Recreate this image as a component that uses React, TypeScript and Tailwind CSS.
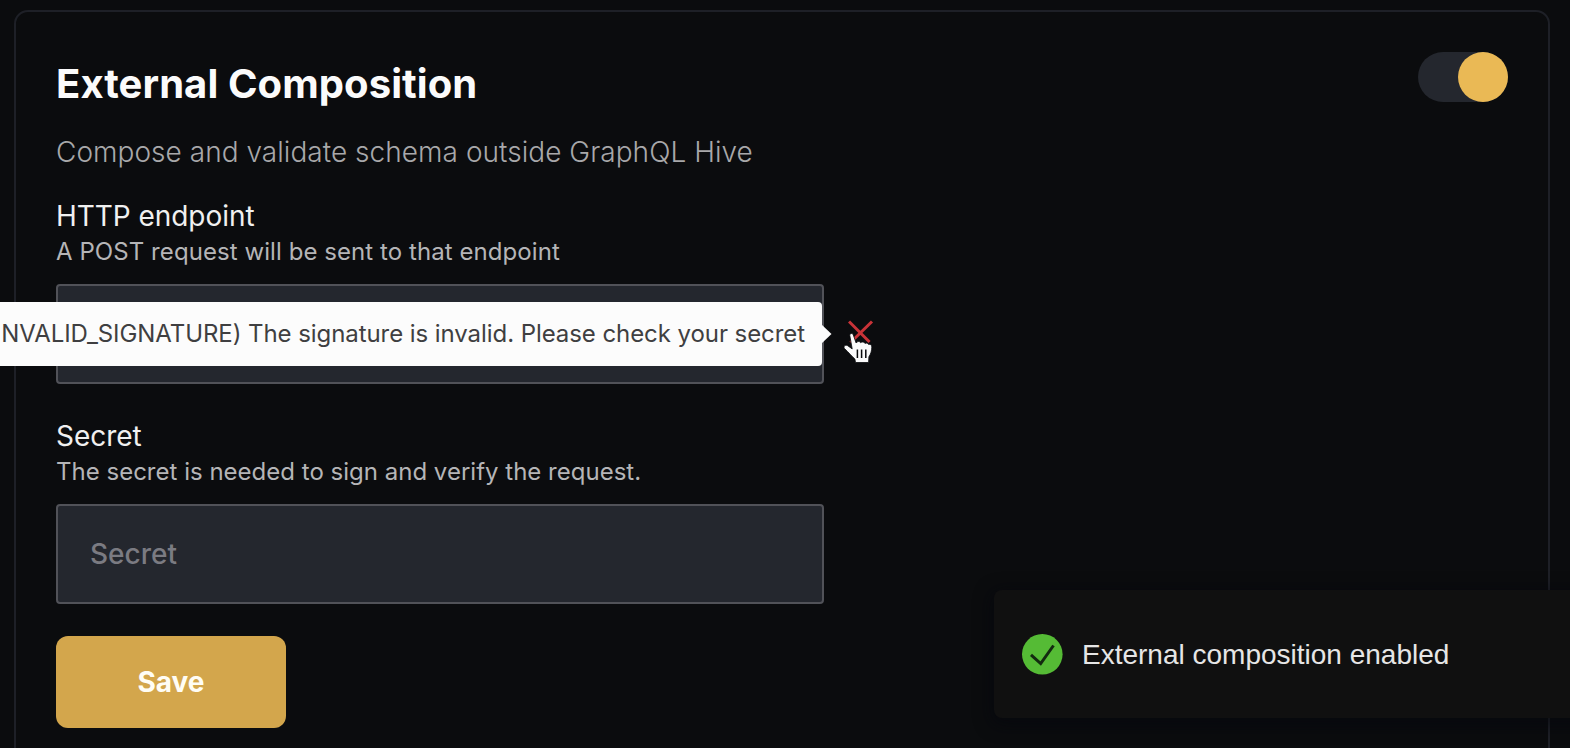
import type { ReactNode } from "react";

function Toggle() {
  return (
    <button
      role="switch"
      aria-checked="true"
      className="flex h-[50px] w-[90px] justify-end rounded-full bg-[#24272e]"
    >
      <span className="size-[50px] rounded-full bg-[#eab955]" />
    </button>
  );
}

function Field({ label, hint, children }: { label: string; hint: ReactNode; children: ReactNode }) {
  return (
    <div className="flex flex-col">
      <div className="h-10 text-[28px] leading-10 tracking-[-0.05px] text-[#f0f0f0]">{label}</div>
      <div className="h-8 text-[24px] leading-8 tracking-[0.07px] text-[#b5b5b7]">{hint}</div>
      <div className="mt-4 flex items-center">{children}</div>
    </div>
  );
}

function ErrorTooltip() {
  return (
    <div className="absolute top-4 right-0 flex h-16 items-center rounded-[4px] bg-[#fcfcfc] pr-[17px] pl-4 text-[24px] tracking-[-0.07px] whitespace-nowrap text-[#3f3f41]">
      <span>(INVALID_SIGNATURE) The signature is invalid. Please check your secret</span>
      <svg className="absolute top-[22px] -right-[10px]" width="11" height="20" viewBox="0 0 11 20" fill="#fcfcfc">
        <path d="M0 0 10.5 10 0 20Z" />
      </svg>
    </div>
  );
}

function ErrorMark() {
  return (
    <div className="relative ml-6 size-6">
      <svg
        className="absolute -top-[2px] left-0"
        width="26"
        height="24"
        viewBox="0 0 26 24"
        fill="none"
        stroke="#c93338"
        strokeWidth="3"
      >
        <path d="M1 1.500 21.500 22M24 1.500 2.500 22.500" />
      </svg>
      <svg
        className="absolute top-[10px] -left-[6px]"
        width="32"
        height="33"
        viewBox="0 0 31 33"
        stroke="#08090b"
        strokeWidth="0.8"
        strokeLinejoin="round"
      >
        <path
          fill="#fafafa"
          d="M7.300 3.600C7 1.300 10 .6 10.800 2.900L13.600 11c.8-1.900 4-1.900 4.600-.3 1-1.300 3.900-.9 4.300.8 1.200-1 3.200-.3 3.600 1 2-.7 3.300.6 3.200 2.700-.1 3.700-.9 6.600-2.900 9.600l-.3 5.700H13l-.6-3.500C9.200 24.200 6.200 20.400 2 16.500c-1.500-2 .8-4.200 3.200-2.800l4.500 3.200Z"
        />
        <path fill="none" strokeWidth="1.500" d="M14.900 17.500v8.500M19.100 17.500v8.500M23.300 17.500v8.500" />
      </svg>
    </div>
  );
}

function Toast() {
  return (
    <div className="absolute top-[590px] left-[994px] flex h-[128px] w-[600px] items-center rounded-[8px] bg-[#101010] pl-7 shadow-[0_4px_16px_4px_rgba(5,6,14,0.6)]">
      <svg width="41" height="41" viewBox="0 0 41 41" fill="none">
        <circle cx="20.300" cy="20.300" r="20.300" fill="#55bb35" />
        <path d="M9 20.800 18.700 29.500 31.500 11.500" stroke="#132a10" strokeWidth="3" />
      </svg>
      <span className="mt-[2px] ml-[19px] font-['Liberation_Sans',Arial,sans-serif] text-[28px] leading-none whitespace-nowrap text-[#e6e6e6]">
        External composition enabled
      </span>
    </div>
  );
}

export default function App() {
  return (
    <main className="relative h-[748px] w-[1570px] overflow-hidden bg-[#0b0c0e] px-[14px] pt-[10px] font-[Inter,sans-serif]">
      <section className="h-[780px] w-[1536px] rounded-[14px] border-2 border-[#1e2027] px-10">
        <header className="flex h-[100px] items-start justify-between pt-[40px]">
          <h1 className="mt-1 text-[40px] leading-[56px] font-bold tracking-[0.08px] text-[#fbfbfb]">
            External Composition
          </h1>
          <Toggle />
        </header>
        <p className="mt-5 text-[28px] leading-10 font-light tracking-[0.040px] text-[#a8a8aa]">
          Compose and validate schema outside GraphQL Hive
        </p>
        <form className="mt-6 flex flex-col items-start">
          <Field label="HTTP endpoint" hint="A POST request will be sent to that endpoint">
            <div className="relative h-[100px] w-[768px] rounded-[4px] border-2 border-[#515258] bg-[#24272e]">
              <ErrorTooltip />
            </div>
            <ErrorMark />
          </Field>
          <div className="mt-8">
            <Field
              label="Secret"
              hint={<span className="tracking-[0.01px]">The secret is needed to sign and verify the request.</span>}
            >
              <div className="flex h-[100px] w-[768px] items-center rounded-[4px] border-2 border-[#515258] bg-[#24272e] px-8 text-[28px] font-medium text-[#7b7b82]">
                Secret
              </div>
            </Field>
          </div>
          <button
            type="button"
            className="mt-8 h-[92px] w-[230px] rounded-[12px] bg-[#d3a64c] text-[28px] font-bold text-[#fffdf5]"
          >
            Save
          </button>
        </form>
      </section>
      <Toast />
    </main>
  );
}
